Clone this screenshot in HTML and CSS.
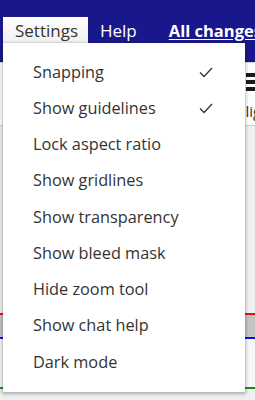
FILE: index.html
```html
<!DOCTYPE html>
<html>
<head>
<meta charset="utf-8">
<link rel="stylesheet" href="styles.css">
</head>
<body>
<div class="page">
  <header class="header">
    <nav class="nav">
      <span class="tab active">Settings</span>
      <span class="tab">Help</span>
      <a class="link">All changes saved</a>
    </nav>
  </header>
  <div class="toolbar">
    <div class="toolbar-right">
      <div class="burger"><i></i><i></i><i></i></div>
      <span class="tool-label">Alignment</span>
    </div>
  </div>
  <div class="canvas">
    <div class="spacer"></div>
    <div class="band"></div>
    <div class="gap"></div>
    <div class="green"></div>
  </div>

  <div class="menu">
    <div class="item"><span>Snapping</span><svg class="check" viewBox="0 0 14 11"><polyline points="1,5.5 5,9.5 13,1" /></svg></div>
    <div class="item"><span>Show guidelines</span><svg class="check" viewBox="0 0 14 11"><polyline points="1,5.5 5,9.5 13,1" /></svg></div>
    <div class="item"><span>Lock aspect ratio</span></div>
    <div class="item"><span>Show gridlines</span></div>
    <div class="item"><span>Show transparency</span></div>
    <div class="item"><span>Show bleed mask</span></div>
    <div class="item"><span>Hide zoom tool</span></div>
    <div class="item"><span>Show chat help</span></div>
    <div class="item"><span>Dark mode</span></div>
  </div>
</div>
</body>
</html>
```
FILE: styles.css
```css
html, body {
  margin: 0;
  padding: 0;
}
body {
  width: 255px;
  height: 400px;
  overflow: hidden;
  font-family: "Open Sans", "Lato", sans-serif;
  background: #ececec;
}
.page {
  position: relative;
  width: 255px;
  height: 400px;
  overflow: hidden;
  display: flex;
  flex-direction: column;
}
.header {
  background: #18188c;
  height: 62px;
  flex: none;
}
.nav {
  display: flex;
  align-items: flex-start;
  padding: 17px 0 0 3px;
  white-space: nowrap;
}
.tab {
  color: #ffffff;
  font-size: 17px;
  height: 26px;
  line-height: 27px;
  padding: 0 12px;
}
.tab.active {
  background: linear-gradient(#ffffff, #f1f1f1);
  color: #333;
  width: 61px;
  text-align: center;
}
.tab:nth-child(2) {
  padding-left: 12px;
  padding-right: 32px;
}
.link {
  color: #fff;
  font-weight: bold;
  font-size: 16.5px;
  line-height: 27px;
  text-decoration: underline;
  text-underline-offset: 2px;
}
.toolbar {
  height: 62px;
  flex: none;
  background: #ffffff;
  border-top: 1px solid #d8d8d8;
  border-bottom: 1px solid #cfcfcf;
  display: flex;
  justify-content: flex-end;
}
.toolbar-right {
  width: 9px;
  overflow: hidden;
  display: flex;
  flex-direction: column;
  align-items: flex-start;
  padding-top: 10px;
}
.burger {
  display: flex;
  flex-direction: column;
  gap: 3px;
}
.burger i {
  display: block;
  width: 20px;
  height: 4px;
  background: #1a1a1a;
}
.tool-label {
  font-size: 15px;
  color: #333;
  margin-left: -10px;
  margin-top: 10px;
  white-space: nowrap;
}
.canvas {
  flex: 1;
  display: flex;
  flex-direction: column;
  background: #efefef;
}
.spacer {
  height: 187px;
  flex: none;
}
.band {
  height: 22px;
  flex: none;
  background: #c4c4c4;
  border-top: 2px solid #e01010;
  border-bottom: 2px solid #1010e0;
}
.gap {
  height: 48px;
  flex: none;
  background: #f6f6f6;
}
.green {
  height: 2px;
  background: #1a8a1a;
}
.menu {
  position: absolute;
  left: 3px;
  top: 43px;
  width: 242px;
  height: 349px;
  background: #ffffff;
  box-shadow: 0 1px 3px 1px rgba(0,0,0,0.28);
  box-sizing: border-box;
  padding-top: 11px;
  display: flex;
  flex-direction: column;
}
.item {
  height: 36.25px;
  display: flex;
  align-items: center;
  justify-content: space-between;
  padding: 0 32px 0 30px;
  font-size: 16.3px;
  color: #333;
  box-sizing: border-box;
}
.item span {
  line-height: 36px;
  margin-top: -1px;
}
.check {
  width: 14px;
  height: 11px;
  fill: none;
  stroke: #333;
  stroke-width: 1.3;
}
```
